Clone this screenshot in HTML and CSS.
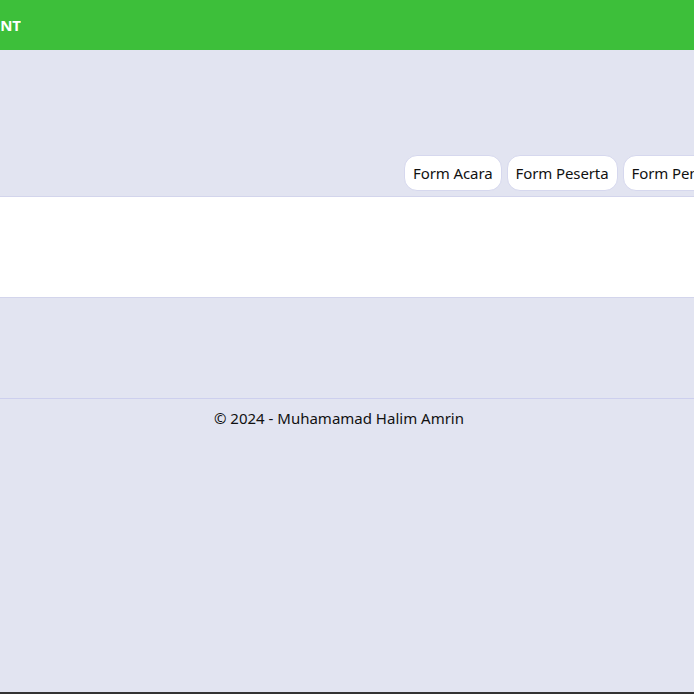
FILE: index.html
```html
<!DOCTYPE html>
<html lang="id">
<head>
<meta charset="utf-8">
<title>Event Management</title>
<link rel="stylesheet" href="styles.css">
</head>
<body>
<div class="page">
  <header class="topbar">
    <div class="brand-clip"><span class="brand">EVENT MANAGEMENT</span></div>
  </header>
  <main class="main">
    <nav class="tabs">
      <a class="tab" href="#">Form Acara</a>
      <a class="tab" href="#">Form Peserta</a>
      <a class="tab" href="#">Form Pendaftaran</a>
    </nav>
    <section class="panel"></section>
    <div class="spacer"></div>
  </main>
  <footer class="footer">© 2024 - Muhamamad Halim Amrin</footer>
</div>
</body>
</html>
```
FILE: styles.css
```css
html, body {
  margin: 0;
  padding: 0;
  overflow: hidden;
}
body {
  background: #e2e4f1;
  font-family: "Noto Sans", "Open Sans", sans-serif;
  color: #111;
}
.page {
  min-height: 692px;
  border-bottom: 2px solid #333333;
  display: flex;
  flex-direction: column;
}
.topbar {
  height: 50px;
  background: #3dbf3a;
  display: flex;
  align-items: center;
}
.brand-clip {
  width: 21px;
  overflow: hidden;
  display: flex;
  justify-content: flex-end;
  white-space: nowrap;
}
.brand {
  color: #fff;
  font-weight: 700;
  font-size: 15px;
  flex: none;
}
.main {
  display: flex;
  flex-direction: column;
  padding-top: 105px;
}
.tabs {
  display: flex;
  gap: 5px;
  padding-left: 404px;
  margin-bottom: 5px;
  white-space: nowrap;
}
.tab {
  flex: none;
  display: block;
  height: 33px;
  line-height: 32px;
  padding: 1px 8px 0;
  background: #fff;
  border: 1px solid #d6d8ee;
  border-radius: 13px;
  color: #111;
  text-decoration: none;
  font-size: 15px;
  letter-spacing: -0.1px;
}
.panel {
  height: 100px;
  background: #fff;
  border-top: 1px solid #d3d5ec;
  border-bottom: 1px solid #d3d5ec;
}
.spacer {
  height: 100px;
}
.footer {
  border-top: 1px solid #cdcfee;
  text-align: center;
  padding-top: 9px;
  padding-right: 16px;
  font-size: 15px;
  line-height: 21px;
}
```
